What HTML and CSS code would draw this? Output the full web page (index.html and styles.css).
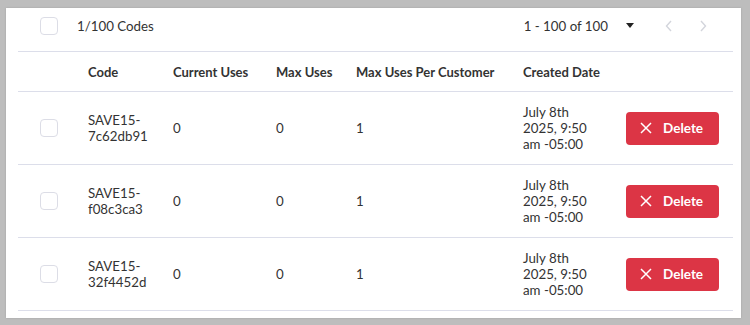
FILE: index.html
```html
<!DOCTYPE html>
<html lang="en">
<head>
  <meta charset="UTF-8"/>
  <title>Discount Codes</title>
  <link rel="stylesheet" href="styles.css">
</head>
<body>

  <!-- Codes card -->
  <div class="card">
    <div class="toolbar">
      <div class="toolbar-left">
        <span class="check"></span>
        <span class="count">1/100 Codes</span>
      </div>
      <div class="pager">
        <span class="range">1 - 100 of 100</span>
        <span class="caret"></span>
        <svg class="chev" width="8" height="12" viewBox="0 0 8 12"><path d="M6 1 1.5 6 6 11" fill="none" stroke="#d3d5dc" stroke-width="1.4"/></svg>
        <svg class="chev" width="8" height="12" viewBox="0 0 8 12"><path d="M2 1 6.5 6 2 11" fill="none" stroke="#d3d5dc" stroke-width="1.4"/></svg>
      </div>
    </div>

    <table class="codes">
      <colgroup>
        <col style="width:70px">
        <col style="width:85px">
        <col style="width:103px">
        <col style="width:80px">
        <col style="width:167px">
        <col style="width:103px">
        <col>
      </colgroup>
      <thead>
        <tr>
          <th></th>
          <th>Code</th>
          <th>Current Uses</th>
          <th>Max Uses</th>
          <th>Max Uses Per Customer</th>
          <th>Created Date</th>
          <th></th>
        </tr>
      </thead>
      <tbody>
        <tr>
          <td><span class="check"></span></td>
          <td><div class="code">SAVE15-7c62db91</div></td>
          <td>0</td>
          <td>0</td>
          <td>1</td>
          <td><div class="date">July 8th 2025, 9:50 am -05:00</div></td>
          <td><button class="delete-btn"><svg width="12" height="12" viewBox="0 0 12 12"><path d="M1 1 11 11M11 1 1 11" stroke="#fff" stroke-width="1.5"/></svg>Delete</button></td>
        </tr>
        <tr>
          <td><span class="check"></span></td>
          <td><div class="code">SAVE15-f08c3ca3</div></td>
          <td>0</td>
          <td>0</td>
          <td>1</td>
          <td><div class="date">July 8th 2025, 9:50 am -05:00</div></td>
          <td><button class="delete-btn"><svg width="12" height="12" viewBox="0 0 12 12"><path d="M1 1 11 11M11 1 1 11" stroke="#fff" stroke-width="1.5"/></svg>Delete</button></td>
        </tr>
        <tr>
          <td><span class="check"></span></td>
          <td><div class="code">SAVE15-32f4452d</div></td>
          <td>0</td>
          <td>0</td>
          <td>1</td>
          <td><div class="date">July 8th 2025, 9:50 am -05:00</div></td>
          <td><button class="delete-btn"><svg width="12" height="12" viewBox="0 0 12 12"><path d="M1 1 11 11M11 1 1 11" stroke="#fff" stroke-width="1.5"/></svg>Delete</button></td>
        </tr>
      </tbody>
    </table>
  </div>

</body>
</html>
```

FILE: styles.css
```css
body {
  margin: 0;
  padding: 8px 9px 7px 6px;
  background-color: #bdbdbd;
  font-family: Lato, "Noto Sans", sans-serif;
  font-size: 13.3px;
  color: #333;
}

.card {
  background-color: #fff;
  height: 310px;
  padding: 0 8px 0 12px;
  box-sizing: border-box;
  box-shadow: 0 0 2px rgba(0, 0, 0, 0.15);
}

.toolbar {
  height: 44px;
  display: flex;
  align-items: center;
  justify-content: space-between;
  padding-bottom: 8px;
  border-bottom: 1px solid #dcdeea;
  box-sizing: border-box;
}

.toolbar-left {
  display: flex;
  align-items: center;
  gap: 19px;
  padding-left: 22px;
}

.check {
  display: inline-block;
  width: 18px;
  height: 18px;
  border: 1px solid #dcdde6;
  border-radius: 4px;
  box-sizing: border-box;
}

.pager {
  display: flex;
  align-items: center;
  padding-right: 26px;
}

.range {
  margin-right: 18px;
}

.caret {
  width: 0;
  height: 0;
  border-left: 4.5px solid transparent;
  border-right: 4.5px solid transparent;
  border-top: 5px solid #222;
  margin-right: 26px;
}

.chev {
  margin-left: 5px;
  margin-right: 21px;
}

.chev:last-child {
  margin-right: 0;
}

.codes {
  width: 100%;
  table-layout: fixed;
  border-collapse: collapse;
}

.codes th {
  height: 39px;
  text-align: left;
  font-weight: 700;
  font-size: 13px;
  padding: 0;
  border-bottom: 1px solid #dcdeea;
  color: #333;
}

.codes td {
  height: 72px;
  padding: 0;
  border-bottom: 1px solid #dcdeea;
  line-height: 16px;
}

.codes td:first-child {
  padding-left: 22px;
}

.codes td .check {
  vertical-align: middle;
}

.code {
  width: 70px;
}

.date {
  width: 72px;
}

.delete-btn {
  display: flex;
  align-items: center;
  gap: 11px;
  width: 93px;
  height: 33px;
  padding: 0 0 0 14px;
  border: none;
  border-radius: 4px;
  background-color: #dc3545;
  color: #fff;
  font-family: inherit;
  font-size: 13.5px;
  font-weight: 700;
}
```
